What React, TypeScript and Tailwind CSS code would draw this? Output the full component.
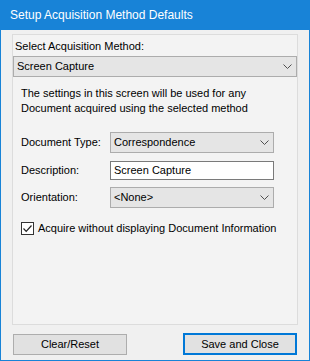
const Chevron = () => (
  <svg width="9" height="5" viewBox="0 0 9 5" className="shrink-0">
    <path d="M0.5 0.5 L4.5 4.5 L8.5 0.5" fill="none" stroke="#505050" strokeWidth="1" />
  </svg>
);

const Combo = ({ value, className }: { value: string; className: string }) => (
  <div
    className={`flex items-center justify-between h-[21px] bg-[#e5e5e5] border border-[#acacac] pl-[3px] pr-[4px] ${className}`}
  >
    <span>{value}</span>
    <Chevron />
  </div>
);

export default function App() {
  return (
    <div className="w-[310px] h-[361px] bg-[#1883d7] px-[1px] pb-[1px] flex flex-col font-['Liberation_Sans',Arial,sans-serif] text-[11px] text-black">
      <div className="h-[30px] flex items-center pl-[9px] text-white text-[12px]">
        Setup Acquisition Method Defaults
      </div>

      <div className="flex-1 bg-[#f0f0f0] px-[11px] pt-[4px] flex flex-col">
        <div className="h-[291px] border border-[#dcdcdc] bg-[#f3f3f3] flex flex-col">
          <div className="pl-[2px] pt-[5px] h-[21px] leading-[13px]">Select Acquisition Method:</div>
          <Combo value="Screen Capture" className="w-[284px]" />

          <div className="pl-[8px] pt-[9px] leading-[15px]">
            <p>The settings in this screen will be used for any</p>
            <p>Document acquired using the selected method</p>
          </div>

          <div className="pl-[8px] pt-[16px] flex flex-col">
            <div className="flex items-center">
              <span className="w-[89px]">Document Type:</span>
              <Combo value="Correspondence" className="w-[164px]" />
            </div>
            <div className="flex items-center h-[19px] mt-[8px]">
              <span className="w-[89px]">Description:</span>
              <div className="w-[164px] h-[19px] bg-white border border-[#7a7a7a] pl-[3px] flex items-center">
                Screen Capture
              </div>
            </div>
            <div className="flex items-center mt-[7px]">
              <span className="w-[89px]">Orientation:</span>
              <Combo value="<None>" className="w-[164px]" />
            </div>
          </div>

          <label className="pl-[8px] pt-[14px] flex items-center gap-[4px] whitespace-nowrap leading-[13px]">
            <span className="w-[13px] h-[13px] border border-[#333333] bg-white flex items-center justify-center shrink-0">
              <svg width="11" height="11" viewBox="0 0 11 11">
                <path d="M1.5 5.5 L4.2 8.3 L9.5 2.5" fill="none" stroke="#222222" strokeWidth="1.2" />
              </svg>
            </span>
            <span>Acquire without displaying Document Information</span>
          </label>
        </div>

        <div className="flex justify-between pt-[8px] pl-[1px] pr-[1px]">
          <button className="w-[114px] h-[21px] mt-[1px] bg-[#e1e1e1] border border-[#adadad]">Clear/Reset</button>
          <button className="w-[114px] h-[22px] bg-[#e1e1e1] border-2 border-[#0078d7]">Save and Close</button>
        </div>
      </div>
    </div>
  );
}
